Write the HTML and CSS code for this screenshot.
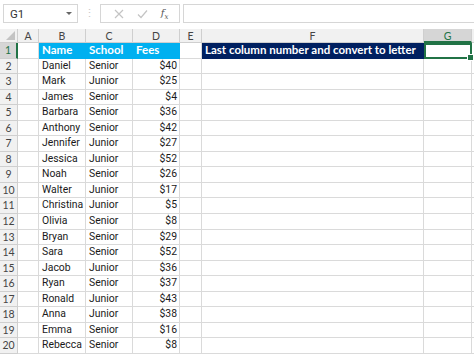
FILE: index.html
```html
<!DOCTYPE html>
<html lang="en">
<head>
    <meta charset="UTF-8">
    <title>Sheet</title>
    <link rel="stylesheet" href="styles.css">
</head>
<body>
    <div class="formula-bar">
        <div class="name-box">
            <span>G1</span>
            <span class="caret"></span>
        </div>
        <div class="grip">⋮</div>
        <div class="fx-tools">
            <svg width="10" height="10" viewBox="0 0 10 10"><path d="M1 1 L9 9 M9 1 L1 9" stroke="#c4c4c4" stroke-width="1.2" fill="none"/></svg>
            <svg width="11" height="10" viewBox="0 0 11 10"><path d="M1 5.5 L4 8.5 L10 1.5" stroke="#c4c4c4" stroke-width="1.2" fill="none"/></svg>
            <span class="fx">f<sub>x</sub></span>
        </div>
        <div class="formula-input"></div>
    </div>

    <div class="sheet" id="sheet">
        <div class="hd corner"><span class="tri"></span></div>
        <div class="hd col">A</div>
        <div class="hd col">B</div>
        <div class="hd col">C</div>
        <div class="hd col">D</div>
        <div class="hd col">E</div>
        <div class="hd col">F</div>
        <div class="hd col active">G</div>
        <div class="hd col"></div>
    </div>

<script>
    // datos de la hoja
    const filas = [
        ['Daniel', 'Senior', 40], ['Mark', 'Junior', 25], ['James', 'Senior', 4],
        ['Barbara', 'Senior', 36], ['Anthony', 'Senior', 42], ['Jennifer', 'Junior', 27],
        ['Jessica', 'Junior', 52], ['Noah', 'Senior', 26], ['Walter', 'Junior', 17],
        ['Christina', 'Junior', 5], ['Olivia', 'Senior', 8], ['Bryan', 'Senior', 29],
        ['Sara', 'Senior', 52], ['Jacob', 'Junior', 36], ['Ryan', 'Senior', 37],
        ['Ronald', 'Junior', 43], ['Anna', 'Junior', 38], ['Emma', 'Senior', 16],
        ['Rebecca', 'Senior', 8]
    ];

    const sheet = document.getElementById('sheet');

    function celda(texto, clase) {
        const c = document.createElement('div');
        c.className = 'cell' + (clase ? ' ' + clase : '');
        c.textContent = texto;
        sheet.appendChild(c);
    }

    // fila 1
    celda('1', 'hd row active');
    celda('');
    celda('Name', 'blue');
    celda('School', 'blue');
    celda('Fees', 'blue');
    celda('');
    celda('Last column number and convert to letter', 'navy');
    celda('', 'selected');
    celda('');

    filas.forEach((f, i) => {
        celda(String(i + 2), 'hd row');
        celda('');
        celda(f[0]);
        celda(f[1]);
        celda('$' + f[2], 'num');
        celda('');
        celda('');
        celda('');
        celda('');
    });
</script>
</body>
</html>
```

FILE: styles.css
```css
html, body {
    margin: 0;
    padding: 0;
    overflow: hidden;
    background-color: #ffffff;
    font-family: 'Roboto', 'Open Sans', sans-serif;
}

.formula-bar {
    height: 29px;
    display: flex;
    align-items: flex-start;
    padding-top: 4px;
    box-sizing: border-box;
    background-color: #ffffff;
}

.name-box {
    width: 75px;
    height: 19px;
    margin-left: 3px;
    border: 1px solid #d6d6d6;
    box-sizing: border-box;
    display: flex;
    align-items: center;
    justify-content: space-between;
    padding: 0 5px 0 6px;
    font-size: 11.5px;
    color: #333;
}

.caret {
    width: 0;
    height: 0;
    border-left: 3px solid transparent;
    border-right: 3px solid transparent;
    border-top: 3px solid #666;
}

.grip {
    width: 22px;
    text-align: center;
    color: #c8c8c8;
    font-size: 11px;
    line-height: 19px;
}

.fx-tools {
    width: 80px;
    height: 19px;
    border: 1px solid #d6d6d6;
    box-sizing: border-box;
    display: flex;
    align-items: center;
    justify-content: space-around;
    padding: 0 4px 0 6px;
}

.fx {
    font-family: 'DejaVu Serif', serif;
    font-style: italic;
    font-size: 10px;
    color: #555;
}

.fx sub {
    font-size: 7px;
}

.formula-input {
    flex: 1;
    height: 19px;
    margin-left: 3px;
    border: 1px solid #d6d6d6;
    border-right: none;
    box-sizing: border-box;
}

.sheet {
    display: grid;
    grid-template-columns: 18px 21px 47px 47px 47px 22px 222px 48px 1fr;
    grid-template-rows: 14px repeat(20, 15.55px);
    font-size: 10.4px;
    color: #1a1a1a;
}

.cell, .hd {
    border-right: 1px solid #dadada;
    border-bottom: 1px solid #dadada;
    box-sizing: border-box;
    white-space: nowrap;
    overflow: visible;
    padding: 0 2px 0 3px;
    line-height: 14.5px;
}

.hd {
    background-color: #f1f1f1;
    color: #444;
    font-family: 'Lato', sans-serif;
    font-size: 10.5px;
    text-align: center;
    border-color: #cfcfcf;
    padding: 0;
}

.hd.col {
    line-height: 14px;
}

.hd.active {
    background-color: #d6d6d6;
    color: #217346;
}

.hd.col.active {
    border-bottom: 2px solid #217346;
}

.hd.row.active {
    border-right: 2px solid #217346;
}

.corner {
    position: relative;
}

.tri {
    position: absolute;
    right: 2px;
    bottom: 2px;
    width: 0;
    height: 0;
    border-left: 9px solid transparent;
    border-bottom: 9px solid #c3c3c3;
}

.blue, .navy {
    font-family: 'Lato', sans-serif;
    font-size: 11.5px;
    color: #ffffff;
    font-weight: bold;
}

.blue {
    background-color: #00b0f0;
    border-color: #00b0f0;
}

.navy {
    background-color: #002060;
    border-color: #002060;
}

.num {
    text-align: right;
}

.selected {
    border: 2px solid #217346;
    position: relative;
}

.selected::after {
    content: '';
    position: absolute;
    right: -4px;
    bottom: -4px;
    width: 5px;
    height: 5px;
    background-color: #217346;
    border: 1px solid #fff;
}
```
